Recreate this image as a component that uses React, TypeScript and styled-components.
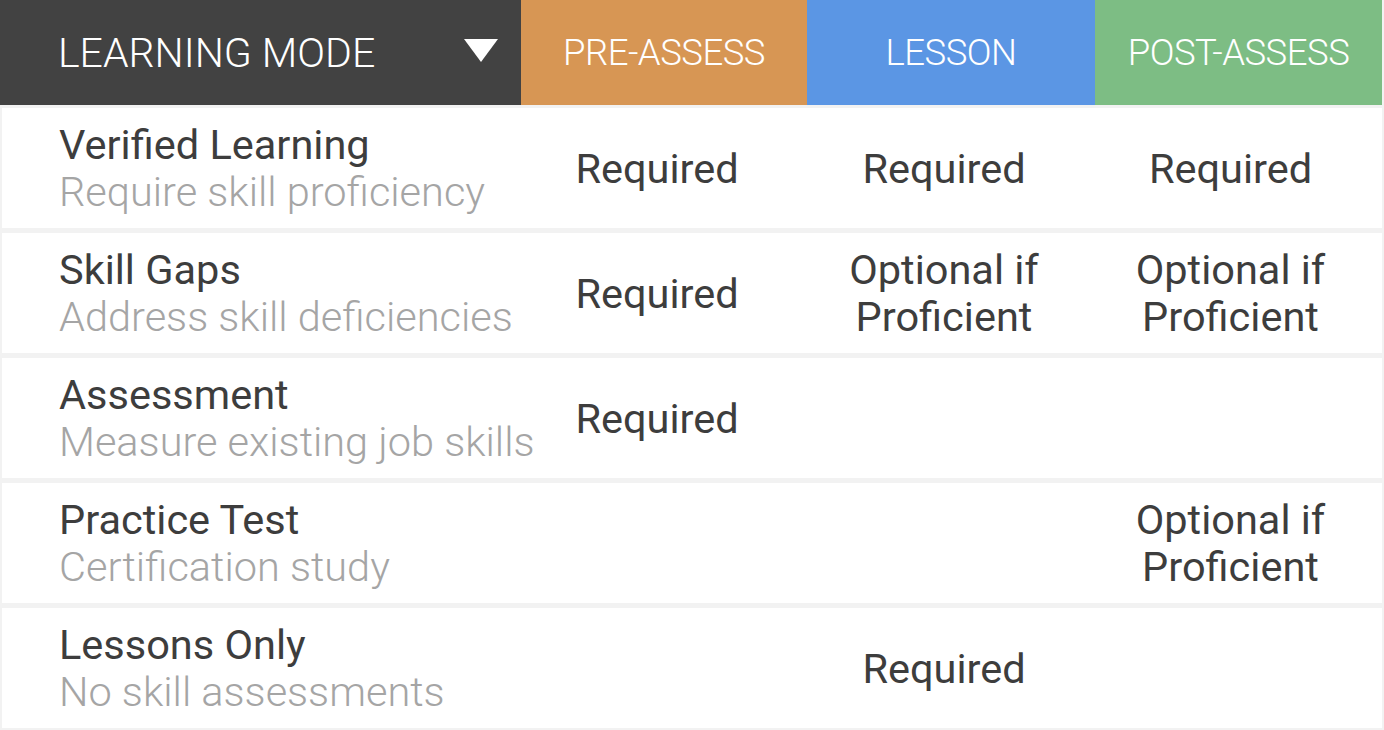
import styled, { createGlobalStyle } from 'styled-components'

const GlobalStyle = createGlobalStyle`
  body {
    margin: 0;
    background: #f2f2f2;
    font-family: Roboto, "Liberation Sans", sans-serif;
  }
`

type Mode = {
  title: string
  subtitle: string
  cells: [string, string, string]
}

const modes: Mode[] = [
  { title: 'Verified Learning', subtitle: 'Require skill proficiency', cells: ['Required', 'Required', 'Required'] },
  { title: 'Skill Gaps', subtitle: 'Address skill deficiencies', cells: ['Required', 'Optional if Proficient', 'Optional if Proficient'] },
  { title: 'Assessment', subtitle: 'Measure existing job skills', cells: ['Required', '', ''] },
  { title: 'Practice Test', subtitle: 'Certification study', cells: ['', '', 'Optional if Proficient'] },
  { title: 'Lessons Only', subtitle: 'No skill assessments', cells: ['', 'Required', ''] },
]

const phases = [
  { label: 'PRE-ASSESS', color: '#d79654' },
  { label: 'LESSON', color: '#5b96e4' },
  { label: 'POST-ASSESS', color: '#7dbd84' },
]

export default function App() {
  return (
    <>
      <GlobalStyle />
      <Table>
        <HeaderRow>
          <ModeHeader>
            <span>LEARNING MODE</span>
            <svg width="34" height="23" viewBox="0 0 34 23">
              <polygon points="0,0 34,0 17,23" fill="#fff" />
            </svg>
          </ModeHeader>
          {phases.map((p) => (
            <PhaseHeader key={p.label} $color={p.color}>
              {p.label}
            </PhaseHeader>
          ))}
        </HeaderRow>
        {modes.map((m) => (
          <Row key={m.title}>
            <Label>
              <Title>{m.title}</Title>
              <Subtitle>{m.subtitle}</Subtitle>
            </Label>
            {m.cells.map((c, i) => (
              <Cell key={i}>{c}</Cell>
            ))}
          </Row>
        ))}
      </Table>
    </>
  )
}

const Table = styled.div`
  width: 1384px;
  height: 730px;
  overflow: hidden;
  display: flex;
  flex-direction: column;
  gap: 5px;
  background: #f2f2f2;
`

const HeaderRow = styled.div`
  display: grid;
  grid-template-columns: 521px 286px 288px 287px;
  height: 105px;
  flex-shrink: 0;
  margin-bottom: -2px;
`

const ModeHeader = styled.div`
  background: #424242;
  color: #fff;
  display: flex;
  align-items: center;
  justify-content: space-between;
  padding: 0 23px 0 58px;
  font-size: 41px;
  font-weight: 300;

  svg {
    margin-top: -4px;
  }
`

const PhaseHeader = styled.div<{ $color: string }>`
  background: ${(p) => p.$color};
  color: #fff;
  display: flex;
  align-items: center;
  justify-content: center;
  font-size: 36.5px;
  font-weight: 300;
  letter-spacing: -0.5px;
`

const Row = styled.div`
  display: grid;
  grid-template-columns: 519px 286px 288px 285px;
  height: 120px;
  flex-shrink: 0;
  margin: 0 2px;
  background: #fff;
`

const Label = styled.div`
  display: flex;
  flex-direction: column;
  justify-content: center;
  padding-left: 57px;
  line-height: 47px;
  white-space: nowrap;
  min-width: 0;
`

const Title = styled.div`
  font-size: 41.5px;
  color: #3d3d3d;
`

const Subtitle = styled.div`
  font-size: 41.5px;
  font-weight: 300;
  color: #a5a5a5;
`

const Cell = styled.div`
  display: flex;
  align-items: center;
  justify-content: center;
  text-align: center;
  padding: 0 24px 0 10px;
  font-size: 41.5px;
  line-height: 47px;
  color: #3d3d3d;
`
